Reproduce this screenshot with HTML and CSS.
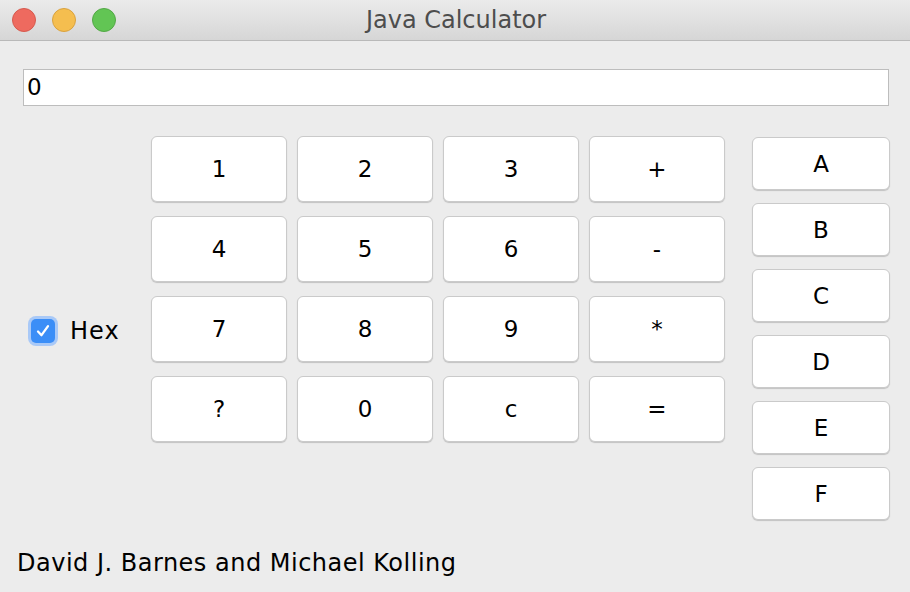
FILE: index.html
```html
<!DOCTYPE html>
<html>
<head>
<meta charset="utf-8">
<link rel="stylesheet" href="styles.css">
</head>
<body>
<div class="window">
  <div class="titlebar">
    <div class="lights">
      <span class="light red"></span>
      <span class="light yellow"></span>
      <span class="light green"></span>
    </div>
    <div class="title">Java Calculator</div>
  </div>
  <div class="content">
    <div class="display">0</div>
    <div class="main">
      <div class="side">
        <label class="check">
          <span class="box"><svg width="16" height="16" viewBox="0 0 16 16"><path d="M3 8.5 L6.5 12.2 L13 3.2" fill="none" stroke="#fff" stroke-width="2.3" stroke-linecap="round" stroke-linejoin="round"/></svg></span>
          <span class="check-label">Hex</span>
        </label>
      </div>
      <div class="keypad">
        <button class="btn">1</button>
        <button class="btn">2</button>
        <button class="btn">3</button>
        <button class="btn">+</button>
        <button class="btn">4</button>
        <button class="btn">5</button>
        <button class="btn">6</button>
        <button class="btn">-</button>
        <button class="btn">7</button>
        <button class="btn">8</button>
        <button class="btn">9</button>
        <button class="btn">*</button>
        <button class="btn">?</button>
        <button class="btn">0</button>
        <button class="btn">c</button>
        <button class="btn">=</button>
      </div>
      <div class="hexkeys">
        <button class="btn hex">A</button>
        <button class="btn hex">B</button>
        <button class="btn hex">C</button>
        <button class="btn hex">D</button>
        <button class="btn hex">E</button>
        <button class="btn hex">F</button>
      </div>
    </div>
    <div class="footer">David J. Barnes and Michael Kolling</div>
  </div>
</div>
</body>
</html>
```

FILE: styles.css
```css
html, body {
  margin: 0;
  padding: 0;
  background: #ececec;
}
.window {
  width: 910px;
  height: 592px;
  background: #ececec;
  font-family: "DejaVu Sans", "Liberation Sans", sans-serif;
  color: #000;
  overflow: hidden;
}
.titlebar {
  position: relative;
  height: 40px;
  background: linear-gradient(#ebebeb, #d6d6d6);
  border-bottom: 1px solid #b9b9b9;
  display: flex;
  align-items: center;
  justify-content: center;
}
.lights {
  position: absolute;
  left: 12px;
  top: 8px;
  display: flex;
  gap: 16px;
}
.light {
  width: 24px;
  height: 24px;
  border-radius: 50%;
  box-sizing: border-box;
}
.red { background: #ee6a5f; border: 1px solid #d65a4e; }
.yellow { background: #f5be4f; border: 1px solid #d9a23f; }
.green { background: #62c554; border: 1px solid #53a846; }
.title {
  font-size: 24px;
  color: #4d4d4d;
  padding-left: 2px;
}
.content {
  padding: 28px 20px 0 23px;
}
.display {
  width: 866px;
  height: 37px;
  box-sizing: border-box;
  background: #fff;
  border: 1px solid #bdbdbd;
  font-size: 23px;
  line-height: 35px;
  padding-left: 3px;
}
.main {
  display: flex;
  margin-top: 30px;
  align-items: flex-start;
}
.side {
  width: 128px;
  box-sizing: border-box;
  align-self: stretch;
  display: flex;
  align-items: center;
  padding-left: 8px;
  padding-top: 6px;
}
.check {
  display: flex;
  align-items: center;
  gap: 15px;
}
.box {
  width: 24px;
  height: 24px;
  border-radius: 5px;
  background: #3b8ef7;
  box-shadow: 0 0 0 3px #a9c9f7;
  display: flex;
  align-items: center;
  justify-content: center;
}
.check-label {
  font-size: 24px;
  letter-spacing: 1px;
}
.keypad {
  display: grid;
  grid-template-columns: repeat(4, 136px);
  grid-auto-rows: 66px;
  column-gap: 10px;
  row-gap: 14px;
}
.btn {
  font-family: "DejaVu Sans", "Liberation Sans", sans-serif;
  font-size: 23px;
  color: #000;
  background: #fff;
  border: 1px solid #cacaca;
  border-radius: 6px;
  box-shadow: 0 1px 1px rgba(0, 0, 0, 0.18);
  padding: 0;
  margin: 0;
}
.hexkeys {
  margin-left: 27px;
  margin-top: 1px;
  display: flex;
  flex-direction: column;
  gap: 13px;
  width: 138px;
}
.hex {
  height: 53px;
}
.footer {
  margin-top: 29px;
  margin-left: -6px;
  font-size: 24px;
  letter-spacing: 0.5px;
}
```
